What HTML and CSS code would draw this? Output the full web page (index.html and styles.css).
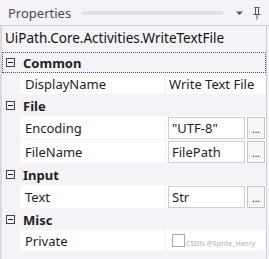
FILE: index.html
```html
<!DOCTYPE html>
<html lang="en">
<head>
  <meta charset="UTF-8">
  <title>Properties</title>
  <link rel="stylesheet" href="styles.css">
</head>
<body>

  <div class="panel">
    <!-- Заголовок панели -->
    <div class="titlebar">
      <span class="title">Properties</span>
      <span class="grip"></span>
      <svg class="tb-icon" width="9" height="6" viewBox="0 0 9 6"><path d="M1 1.5h7L4.5 5z" fill="#555"/></svg>
      <svg class="tb-icon pin" width="8" height="14" viewBox="0 0 8 14"><path d="M1.5 1.5h5M2.5 1.5v7M5.5 1.5v7M0.5 8.5h7M4 8.5v5" stroke="#555" fill="none"/></svg>
    </div>

    <div class="body">
      <div class="typename">UiPath.Core.Activities.WriteTextFile</div>

      <div class="grid">
        <div class="cat focused"><span class="toggle"></span>Common</div>
        <div class="prop">
          <div class="name">DisplayName</div>
          <div class="value"><span class="plain">Write Text File</span></div>
        </div>

        <div class="cat"><span class="toggle"></span>File</div>
        <div class="prop tall">
          <div class="name">Encoding</div>
          <div class="value"><span class="box">"UTF-8"</span><span class="dots">...</span></div>
        </div>
        <div class="prop tall">
          <div class="name">FileName</div>
          <div class="value"><span class="box">FilePath</span><span class="dots">...</span></div>
        </div>

        <div class="cat"><span class="toggle"></span>Input</div>
        <div class="prop tall">
          <div class="name">Text</div>
          <div class="value"><span class="box">Str</span><span class="dots">...</span></div>
        </div>

        <div class="cat"><span class="toggle"></span>Misc</div>
        <div class="prop">
          <div class="name">Private</div>
          <div class="value"><span class="check"></span><span class="mark">CSDN @Sprite_Henry</span></div>
        </div>
      </div>
    </div>
  </div>

</body>
</html>
```

FILE: styles.css
```css
* {
  margin: 0;
  padding: 0;
  box-sizing: border-box;
}

body {
  font-family: "Noto Sans", Arial, sans-serif;
  font-size: 13px;
  color: #1e1e1e;
  background-color: #f5f3f7;
  width: 269px;
  height: 259px;
  overflow: hidden;
}

.panel {
  height: 259px;
  display: flex;
  flex-direction: column;
}

/* Заголовок */
.titlebar {
  height: 26px;
  display: flex;
  align-items: center;
  padding: 0 8px 0 8px;
  border-bottom: 1px solid #d4d2d8;
  color: #4a4a4a;
}

.title {
  font-size: 13px;
}

.grip {
  flex: 1;
  height: 4px;
  margin: 0 6px 0 11px;
  background-image: radial-gradient(#cac8ce 0.6px, transparent 0.8px);
  background-size: 2px 2px;
}

.tb-icon {
  margin-left: 6px;
}

.pin {
  margin-left: 9px;
}

/* Основная область */
.body {
  flex: 1;
  border-left: 2px solid #dcdadf;
  border-right: 1px solid #cfcdd3;
  margin-right: 2px;
}

.typename {
  height: 25px;
  line-height: 25px;
  padding-left: 3px;
  font-size: 13.5px;
  color: #111;
}

.grid {
  margin-top: 1px;
}

.cat {
  height: 21px;
  display: flex;
  align-items: center;
  font-weight: bold;
  padding-left: 3px;
  border: 1px solid transparent;
}

.cat.focused {
  border: 1px dotted #555;
}

.toggle {
  width: 9px;
  height: 9px;
  border: 1px solid #444;
  margin-right: 8px;
  position: relative;
}

.toggle::after {
  content: "";
  position: absolute;
  left: 1px;
  right: 1px;
  top: 3px;
  height: 1px;
  background: #222;
}

.prop {
  height: 22px;
  display: flex;
  margin-left: 18px;
  border-bottom: 1px solid #f5f3f7;
}

.prop.tall {
  height: 24px;
}

.name {
  width: 146px;
  background: #fff;
  padding-left: 5px;
  display: flex;
  align-items: center;
  border-right: 1px solid #f5f3f7;
}

.value {
  flex: 1;
  background: #fff;
  display: flex;
  align-items: center;
  padding-left: 2px;
}

.plain {
  padding-left: 1px;
}

.box {
  width: 77px;
  height: 22px;
  border: 1px solid #cfcfcf;
  padding-left: 3px;
  display: flex;
  align-items: center;
}

.dots {
  width: 18px;
  height: 22px;
  margin-left: 2px;
  border: 1px solid #c4c4c4;
  background: #f7f7f7;
  font-size: 10px;
  display: flex;
  align-items: flex-end;
  justify-content: center;
  padding-bottom: 4px;
  line-height: 1;
}

.check {
  width: 13px;
  height: 13px;
  border: 1px solid #a9a9a9;
  margin-left: 4px;
}

.mark {
  font-size: 7px;
  color: #b5b5b5;
  margin-left: 1px;
  align-self: flex-end;
  margin-bottom: 3px;
}
```
